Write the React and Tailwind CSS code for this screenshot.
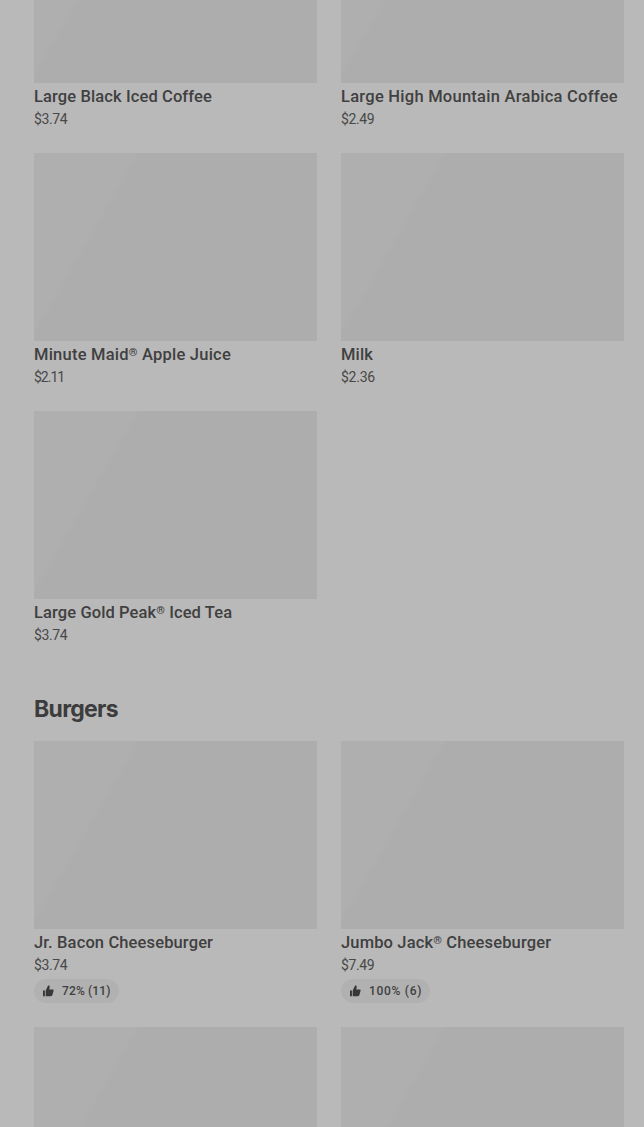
const drinks = [
  { name: 'Large Black Iced Coffee', price: '$3.74', track: 'tracking-[0.11px]' },
  { name: 'Large High Mountain Arabica Coffee', price: '$2.49', track: 'tracking-[0.26px]' },
  { name: 'Minute Maid® Apple Juice', price: '$2.11', track: 'tracking-[0.23px]', priceTrack: 'tracking-[-1px]' },
  { name: 'Milk', price: '$2.36', track: 'tracking-[0.15px]', priceTrack: 'tracking-[-0.25px]' },
  { name: 'Large Gold Peak® Iced Tea', price: '$3.74', track: 'tracking-[0.1px]' },
];

const burgers = [
  { name: 'Jr. Bacon Cheeseburger', price: '$3.74', track: 'tracking-[0.13px]', rating: '72% (11)', pill: 'w-[85px] tracking-[0.15px]' },
  { name: 'Jumbo Jack® Cheeseburger', price: '$7.49', track: 'tracking-[0.15px]', rating: '100% (6)', pill: 'w-[89px] tracking-[0.7px]' },
  { name: '', price: '' },
  { name: '', price: '' },
];

function ThumbIcon() {
  return (
    <svg width="12" height="12" viewBox="0 0 12 12" className="shrink-0" fill="#383838">
      <path d="M1 5.4H2.9V11.2H1Z M3.7 11.2V5.6L6.1 0.4H6.7C7.4 0.4 7.8 1 7.7 1.7L7.3 4.5H10.6C11.4 4.5 11.8 5.1 11.6 5.8L10.4 10.1C10.2 10.8 9.7 11.2 9 11.2Z" />
    </svg>
  );
}

function Title({ text }) {
  const [before, after] = text.split('®');
  if (after === undefined) return text;
  return (
    <>
      {before}
      <span className="align-[4px] text-[11px] leading-none font-bold">®</span>
      {after}
    </>
  );
}

function Card({ item }) {
  return (
    <div className="min-w-0">
      <div className="mb-0.5 h-[188px] bg-[linear-gradient(120deg,#afafaf_88px,#adadad_92px)]" />
      {item.name && (
        <>
          <h3 className={`h-6 text-[16.5px] leading-6 font-medium whitespace-nowrap text-[#404040] ${item.track}`}>
            <Title text={item.name} />
          </h3>
          <p className={`h-5 text-sm leading-5 text-[#484848] ${item.priceTrack || 'tracking-[-0.4px]'}`}>{item.price}</p>
        </>
      )}
      {item.rating && (
        <div className={`mt-1 flex h-6 items-center gap-2 rounded-full bg-[#b1b1b1] pl-2 ${item.pill}`}>
          <ThumbIcon />
          <span className="text-xs leading-5 font-medium whitespace-nowrap text-[#404040]">{item.rating}</span>
        </div>
      )}
    </div>
  );
}

function Grid({ items }) {
  return (
    <div className="grid grid-cols-[283px_283px] gap-6">
      {items.map((item, i) => (
        <Card key={i} item={item} />
      ))}
    </div>
  );
}

export default function App() {
  return (
    <main className="h-[1127px] w-[644px] overflow-hidden bg-[#b9b9b9] pl-[34px] font-['Roboto','Liberation_Sans',sans-serif] antialiased">
      <section className="mt-[-105px]">
        <Grid items={drinks} />
      </section>
      <section>
        <h2 className="mt-[47px] mb-[15px] h-[34px] font-['Inter','Liberation_Sans',sans-serif] text-[23px] leading-[34px] font-bold tracking-[-0.7px] text-[#3c3c3c]">Burgers</h2>
        <Grid items={burgers} />
      </section>
    </main>
  );
}
